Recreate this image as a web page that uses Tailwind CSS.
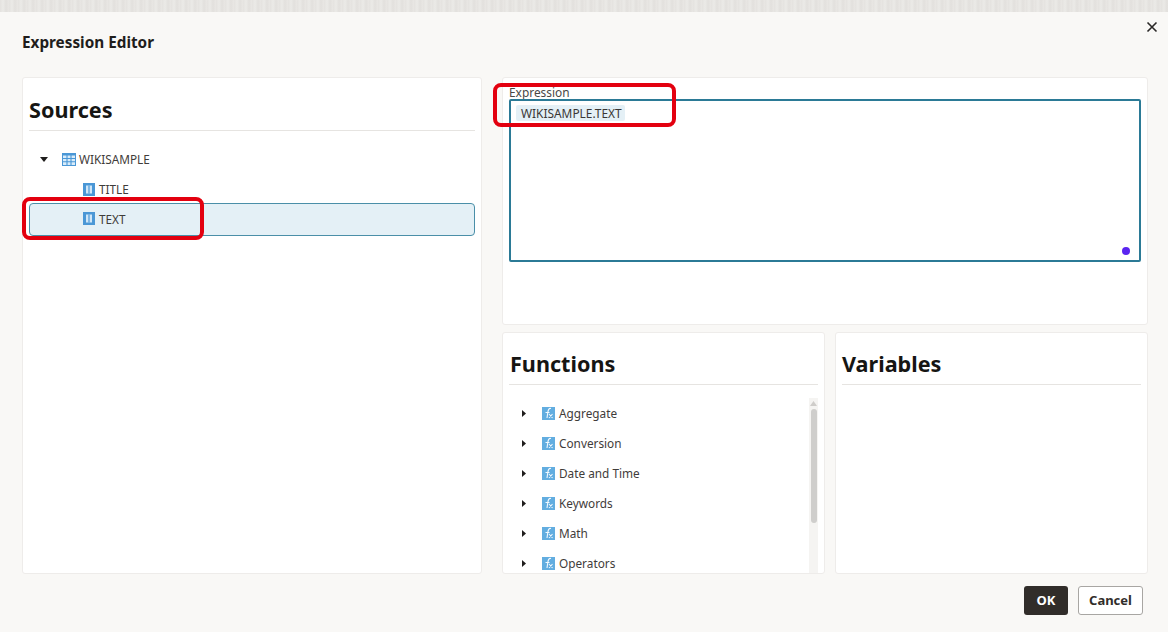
<!doctype html>
<html>
<head>
<meta charset="utf-8">
<script src="https://cdn.jsdelivr.net/npm/@tailwindcss/browser@4"></script>
</head>
<body class="m-0">
<div class="relative w-[1168px] h-[632px] overflow-hidden bg-[#f9f8f6] text-[#2f2c2a] font-['Noto_Sans','Open_Sans',sans-serif]">
  <div class="h-[12px] bg-[#e6e4e1] bg-[repeating-linear-gradient(90deg,#e4e2df_0px,#ebeae7_3px,#e2e0dd_6px,#e9e7e4_9px)]"></div>

  <div class="flex items-center justify-between h-[65px] pl-[22px] pr-[10px]">
    <h1 class="text-[15.3px] leading-[20px] font-bold text-[#1f1d1c] mt-[-5px]">Expression Editor</h1>
    <svg class="w-[12px] h-[12px] mt-[-36px]" viewBox="0 0 12 12" fill="none" stroke="#2a2827" stroke-width="1.6"><path d="M1.5 1.5l9 9M10.5 1.5l-9 9"/></svg>
  </div>

  <div class="flex gap-[20px] pl-[22px] pr-[20px] h-[497px]">
    <section class="w-[460px] h-[497px] bg-white rounded-[3px] border border-[#eeecea] px-[6px]">
      <h2 class="text-[21.6px] leading-[30px] font-bold text-[#161513] pt-[17px] h-[53px] border-b border-[#e6e4e1]">Sources</h2>
      <div class="mt-[14px]">
        <div class="flex items-center h-[30px] text-[11.8px] pl-[11px]">
          <svg class="w-[8px] h-[5px] mb-[2px]" viewBox="0 0 8 5"><path d="M0 0h8L4 5z" fill="#1f1d1c"/></svg>
          <svg class="ml-[14px] w-[14px] h-[13px] mb-[2px]" viewBox="0 0 14 13"><rect width="14" height="13" fill="#4a97d6"/><path d="M1 2.5h12v9.5H1z" fill="#d9ecfa"/><path d="M1 5.5h12M1 8.8h12M5 2v10M9 2v10" stroke="#4a97d6" stroke-width="1.1"/></svg>
          <span class="ml-[3px] text-[#3f3c3a]">WIKISAMPLE</span>
        </div>
        <div class="flex items-center h-[30px] text-[11.8px] pl-[54px]">
          <svg class="w-[12px] h-[13px] mb-[2px]" viewBox="0 0 12 13"><rect width="12" height="13" fill="#4a97d6"/><path d="M3 2.5h6v8H3z" fill="#cfe6f8"/><path d="M6 2.5v8" stroke="#4a97d6" stroke-width="1.2"/></svg>
          <span class="ml-[4px] text-[#3f3c3a]">TITLE</span>
        </div>
        <div class="flex items-center h-[33px] mt-[-2px] text-[11.8px] pl-[53px] bg-[#e4f0f6] border-[1.5px] border-[#4a8fa8] rounded-[4px]">
          <svg class="w-[12px] h-[13px] mb-[2px]" viewBox="0 0 12 13"><rect width="12" height="13" fill="#4a97d6"/><path d="M3 2.5h6v8H3z" fill="#cfe6f8"/><path d="M6 2.5v8" stroke="#4a97d6" stroke-width="1.2"/></svg>
          <span class="ml-[4px] text-[#3f3c3a]">TEXT</span>
        </div>
      </div>
    </section>

    <div class="w-[646px] flex flex-col gap-[7px]">
      <section class="h-[248px] bg-white rounded-[3px] border border-[#eeecea] px-[6px] pt-[7px]">
        <div class="text-[11.9px] leading-[14px] text-[#4a4745]">Expression</div>
        <div class="relative flex items-start h-[163px] border-2 border-[#2b7a96] rounded-[2px] pl-[5px] pt-[4px]">
          <span class="h-[16px] leading-[16px] pl-[5px] pr-[3px] bg-[#e4f0f6] text-[11.9px] text-[#3a3735] rounded-[2px]">WIKISAMPLE.TEXT</span>
          <span class="absolute right-[9px] bottom-[5px] w-[8px] h-[8px] rounded-full bg-[#5a24f0]"></span>
        </div>
      </section>

      <div class="flex gap-[10px] h-[242px]">
        <section class="w-[323px] bg-white rounded-[3px] border border-[#eeecea] pl-[6px] pr-[6px] overflow-hidden">
          <h2 class="text-[21.6px] leading-[30px] font-bold text-[#161513] pt-[16px] h-[52px] border-b border-[#e6e4e1] pl-[1px]">Functions</h2>
          <div class="flex mt-[14px] h-[176px]">
            <ul class="flex-1 pl-[13px]">
              <li class="flex items-center h-[30px] text-[11.8px] text-[#3f3c3a]">
                <svg class="w-[4px] h-[7px] mb-[2px]" viewBox="0 0 4 7"><path d="M0 0l4 3.5L0 7z" fill="#1f1d1c"/></svg>
                <svg class="ml-[16px] w-[13px] h-[13px] mb-[2px]" viewBox="0 0 13 13"><rect width="13" height="13" fill="#62ade0"/><path d="M9 1.5C6.8 1 6.2 3 5.8 5.5L5 11M3.5 5.5h4M7 7l3.5 4M10.5 7L7 11" fill="none" stroke="#f2f9fe" stroke-width="1.1"/></svg>
                <span class="ml-[4px]">Aggregate</span>
              </li>
              <li class="flex items-center h-[30px] text-[11.8px] text-[#3f3c3a]">
                <svg class="w-[4px] h-[7px] mb-[2px]" viewBox="0 0 4 7"><path d="M0 0l4 3.5L0 7z" fill="#1f1d1c"/></svg>
                <svg class="ml-[16px] w-[13px] h-[13px] mb-[2px]" viewBox="0 0 13 13"><rect width="13" height="13" fill="#62ade0"/><path d="M9 1.5C6.8 1 6.2 3 5.8 5.5L5 11M3.5 5.5h4M7 7l3.5 4M10.5 7L7 11" fill="none" stroke="#f2f9fe" stroke-width="1.1"/></svg>
                <span class="ml-[4px]">Conversion</span>
              </li>
              <li class="flex items-center h-[30px] text-[11.8px] text-[#3f3c3a]">
                <svg class="w-[4px] h-[7px] mb-[2px]" viewBox="0 0 4 7"><path d="M0 0l4 3.5L0 7z" fill="#1f1d1c"/></svg>
                <svg class="ml-[16px] w-[13px] h-[13px] mb-[2px]" viewBox="0 0 13 13"><rect width="13" height="13" fill="#62ade0"/><path d="M9 1.5C6.8 1 6.2 3 5.8 5.5L5 11M3.5 5.5h4M7 7l3.5 4M10.5 7L7 11" fill="none" stroke="#f2f9fe" stroke-width="1.1"/></svg>
                <span class="ml-[4px]">Date and Time</span>
              </li>
              <li class="flex items-center h-[30px] text-[11.8px] text-[#3f3c3a]">
                <svg class="w-[4px] h-[7px] mb-[2px]" viewBox="0 0 4 7"><path d="M0 0l4 3.5L0 7z" fill="#1f1d1c"/></svg>
                <svg class="ml-[16px] w-[13px] h-[13px] mb-[2px]" viewBox="0 0 13 13"><rect width="13" height="13" fill="#62ade0"/><path d="M9 1.5C6.8 1 6.2 3 5.8 5.5L5 11M3.5 5.5h4M7 7l3.5 4M10.5 7L7 11" fill="none" stroke="#f2f9fe" stroke-width="1.1"/></svg>
                <span class="ml-[4px]">Keywords</span>
              </li>
              <li class="flex items-center h-[30px] text-[11.8px] text-[#3f3c3a]">
                <svg class="w-[4px] h-[7px] mb-[2px]" viewBox="0 0 4 7"><path d="M0 0l4 3.5L0 7z" fill="#1f1d1c"/></svg>
                <svg class="ml-[16px] w-[13px] h-[13px] mb-[2px]" viewBox="0 0 13 13"><rect width="13" height="13" fill="#62ade0"/><path d="M9 1.5C6.8 1 6.2 3 5.8 5.5L5 11M3.5 5.5h4M7 7l3.5 4M10.5 7L7 11" fill="none" stroke="#f2f9fe" stroke-width="1.1"/></svg>
                <span class="ml-[4px]">Math</span>
              </li>
              <li class="flex items-center h-[30px] text-[11.8px] text-[#3f3c3a]">
                <svg class="w-[4px] h-[7px] mb-[2px]" viewBox="0 0 4 7"><path d="M0 0l4 3.5L0 7z" fill="#1f1d1c"/></svg>
                <svg class="ml-[16px] w-[13px] h-[13px] mb-[2px]" viewBox="0 0 13 13"><rect width="13" height="13" fill="#62ade0"/><path d="M9 1.5C6.8 1 6.2 3 5.8 5.5L5 11M3.5 5.5h4M7 7l3.5 4M10.5 7L7 11" fill="none" stroke="#f2f9fe" stroke-width="1.1"/></svg>
                <span class="ml-[4px]">Operators</span>
              </li>
            </ul>
            <div class="w-[9px] bg-[#f5f4f2] mt-[-1px] flex flex-col items-center">
              <svg class="w-[7px] h-[5px] mt-[3px]" viewBox="0 0 7 5"><path d="M3.5 0L7 5H0z" fill="#cfcdca"/></svg>
              <div class="w-[6px] h-[114px] mt-[3px] rounded-full bg-[#cfcecc]"></div>
            </div>
          </div>
        </section>
        <section class="w-[313px] bg-white rounded-[3px] border border-[#eeecea] px-[6px]">
          <h2 class="text-[21.6px] leading-[30px] font-bold text-[#161513] pt-[16px] h-[52px] border-b border-[#e6e4e1]">Variables</h2>
        </section>
      </div>
    </div>
  </div>

  <div class="flex justify-end gap-[10px] pr-[25px] mt-[12px]">
    <button class="w-[44px] h-[29px] bg-[#312d2a] text-white text-[13px] font-bold rounded-[3px]">OK</button>
    <button class="w-[65px] h-[29px] bg-white border border-[#a8a6a3] text-[#312d2a] text-[13px] font-bold rounded-[3px]">Cancel</button>
  </div>

  <div class="absolute left-[22px] top-[197px] w-[182px] h-[43px] border-[4px] border-[#e3000f] rounded-[8px]"></div>
  <div class="absolute left-[493px] top-[83px] w-[183px] h-[44px] border-[4px] border-[#e3000f] rounded-[8px]"></div>
</div>
</body>
</html>
